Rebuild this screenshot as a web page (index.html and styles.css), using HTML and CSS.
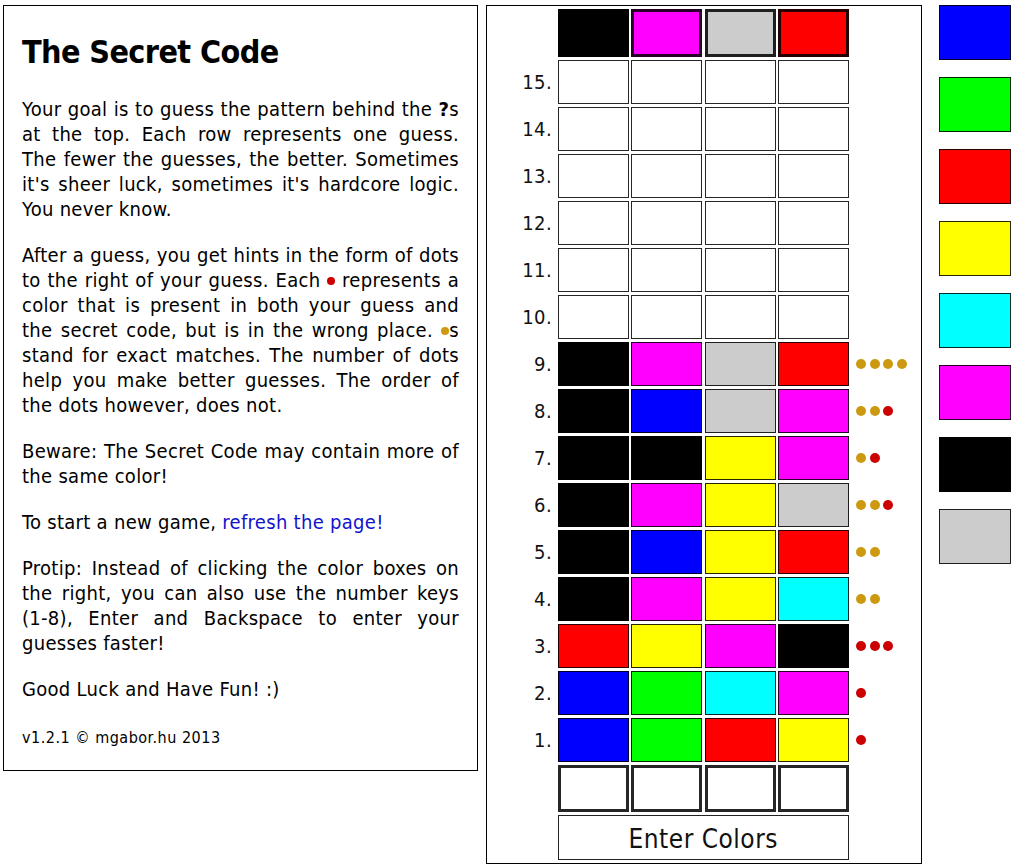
FILE: index.html
```html
<!DOCTYPE html>
<html>
<head>
<meta charset="utf-8">
<title>The Secret Code</title>
<link rel="stylesheet" href="styles.css">
</head>
<body>
<div class="page">
  <div class="info">
    <h1 class="title">The Secret Code</h1>
    <p class="para">
      <span class="line">Your goal is to guess the pattern behind the <b>?</b>s</span>
      <span class="line">at the top. Each row represents one guess.</span>
      <span class="line">The fewer the guesses, the better. Sometimes</span>
      <span class="line">it's sheer luck, sometimes it's hardcore logic.</span>
      <span class="line last">You never know.</span>
    </p>
    <p class="para">
      <span class="line">After a guess, you get hints in the form of dots</span>
      <span class="line">to the right of your guess. Each <span class="mini red"></span> represents a</span>
      <span class="line">color that is present in both your guess and</span>
      <span class="line">the secret code, but is in the wrong place. <span class="mini gold"></span>s</span>
      <span class="line">stand for exact matches. The number of dots</span>
      <span class="line">help you make better guesses. The order of</span>
      <span class="line last">the dots however, does not.</span>
    </p>
    <p class="para">
      <span class="line">Beware: The Secret Code may contain more of</span>
      <span class="line last">the same color!</span>
    </p>
    <p class="para">
      <span class="line last">To start a new game, <a class="link" href="#">refresh the page!</a></span>
    </p>
    <p class="para">
      <span class="line">Protip: Instead of clicking the color boxes on</span>
      <span class="line">the right, you can also use the number keys</span>
      <span class="line">(1-8), Enter and Backspace to enter your</span>
      <span class="line last">guesses faster!</span>
    </p>
    <p class="para">
      <span class="line last">Good Luck and Have Fun! :)</span>
    </p>
    <p class="version">v1.2.1 © mgabor.hu 2013</p>
  </div>

  <div class="board">
    <div class="row secret">
      <span class="label"></span>
      <span class="cell thick c-black"></span>
      <span class="cell thick c-magenta"></span>
      <span class="cell thick c-gray"></span>
      <span class="cell thick c-red"></span>
      <span class="hints"></span>
    </div>
    <div class="row"><span class="label">15.</span><span class="cell"></span><span class="cell"></span><span class="cell"></span><span class="cell"></span><span class="hints"></span></div>
    <div class="row"><span class="label">14.</span><span class="cell"></span><span class="cell"></span><span class="cell"></span><span class="cell"></span><span class="hints"></span></div>
    <div class="row"><span class="label">13.</span><span class="cell"></span><span class="cell"></span><span class="cell"></span><span class="cell"></span><span class="hints"></span></div>
    <div class="row"><span class="label">12.</span><span class="cell"></span><span class="cell"></span><span class="cell"></span><span class="cell"></span><span class="hints"></span></div>
    <div class="row"><span class="label">11.</span><span class="cell"></span><span class="cell"></span><span class="cell"></span><span class="cell"></span><span class="hints"></span></div>
    <div class="row"><span class="label">10.</span><span class="cell"></span><span class="cell"></span><span class="cell"></span><span class="cell"></span><span class="hints"></span></div>
    <div class="row"><span class="label">9.</span><span class="cell c-black"></span><span class="cell c-magenta"></span><span class="cell c-gray"></span><span class="cell c-red"></span><span class="hints"><i class="dot gold"></i><i class="dot gold"></i><i class="dot gold"></i><i class="dot gold"></i></span></div>
    <div class="row"><span class="label">8.</span><span class="cell c-black"></span><span class="cell c-blue"></span><span class="cell c-gray"></span><span class="cell c-magenta"></span><span class="hints"><i class="dot gold"></i><i class="dot gold"></i><i class="dot red"></i></span></div>
    <div class="row"><span class="label">7.</span><span class="cell c-black"></span><span class="cell c-black"></span><span class="cell c-yellow"></span><span class="cell c-magenta"></span><span class="hints"><i class="dot gold"></i><i class="dot red"></i></span></div>
    <div class="row"><span class="label">6.</span><span class="cell c-black"></span><span class="cell c-magenta"></span><span class="cell c-yellow"></span><span class="cell c-gray"></span><span class="hints"><i class="dot gold"></i><i class="dot gold"></i><i class="dot red"></i></span></div>
    <div class="row"><span class="label">5.</span><span class="cell c-black"></span><span class="cell c-blue"></span><span class="cell c-yellow"></span><span class="cell c-red"></span><span class="hints"><i class="dot gold"></i><i class="dot gold"></i></span></div>
    <div class="row"><span class="label">4.</span><span class="cell c-black"></span><span class="cell c-magenta"></span><span class="cell c-yellow"></span><span class="cell c-cyan"></span><span class="hints"><i class="dot gold"></i><i class="dot gold"></i></span></div>
    <div class="row"><span class="label">3.</span><span class="cell c-red"></span><span class="cell c-yellow"></span><span class="cell c-magenta"></span><span class="cell c-black"></span><span class="hints"><i class="dot red"></i><i class="dot red"></i><i class="dot red"></i></span></div>
    <div class="row"><span class="label">2.</span><span class="cell c-blue"></span><span class="cell c-green"></span><span class="cell c-cyan"></span><span class="cell c-magenta"></span><span class="hints"><i class="dot red"></i></span></div>
    <div class="row"><span class="label">1.</span><span class="cell c-blue"></span><span class="cell c-green"></span><span class="cell c-red"></span><span class="cell c-yellow"></span><span class="hints"><i class="dot red"></i></span></div>
    <div class="row input"><span class="label"></span><span class="cell thick"></span><span class="cell thick"></span><span class="cell thick"></span><span class="cell thick"></span><span class="hints"></span></div>
    <div class="row action"><span class="label"></span><button class="enter">Enter Colors</button><span class="hints"></span></div>
  </div>

  <div class="palette">
    <span class="swatch c-blue"></span>
    <span class="swatch c-green"></span>
    <span class="swatch c-red"></span>
    <span class="swatch c-yellow"></span>
    <span class="swatch c-cyan"></span>
    <span class="swatch c-magenta"></span>
    <span class="swatch c-black"></span>
    <span class="swatch c-gray"></span>
  </div>
</div>
</body>
</html>
```

FILE: styles.css
```css
body {
  margin: 0;
  background: #fff;
  color: #000;
  font-family: "DejaVu Sans Condensed", "DejaVu Sans", sans-serif;
  font-stretch: condensed;
}

.page {
  display: flex;
  align-items: flex-start;
  padding: 5px 0 0 3px;
}

.info {
  width: 437px;
  border: 1px solid #000;
  padding: 27px 18px 22px 18px;
}

.title {
  margin: 0 0 26px;
  font-size: 32px;
  line-height: 38px;
  font-weight: bold;
  letter-spacing: -0.6px;
}

.para {
  margin: 0 0 21px;
  font-size: 20px;
  line-height: 25px;
  letter-spacing: 0.3px;
}

.line {
  display: block;
  text-align: justify;
  text-align-last: justify;
}

.line.last {
  text-align-last: left;
}

.version {
  margin: 26px 0 0;
  font-size: 16px;
  line-height: 20px;
  letter-spacing: 0.5px;
}

.link {
  color: #1212cc;
  text-decoration: none;
}

.mini {
  display: inline-block;
  width: 8px;
  height: 8px;
  border-radius: 50%;
  vertical-align: 2px;
}

.mini.red { background: #cc0000; }
.mini.gold { background: #cc9911; }

.board {
  margin-left: 8px;
  width: 428px;
  border: 1px solid #000;
  padding: 3px;
  display: flex;
  flex-direction: column;
  gap: 3px;
}

.row {
  display: grid;
  grid-template-columns: 65px repeat(4, 71px) 1fr;
  column-gap: 2.5px;
  height: 44px;
}

.row.secret { height: 48px; }
.row.input { height: 47px; }
.row.action { height: 45px; }

.label {
  display: flex;
  align-items: center;
  justify-content: flex-end;
  padding-right: 3px;
  font-size: 20px;
  letter-spacing: 0.4px;
  color: #111;
}

.cell {
  border: 1px solid rgba(0, 0, 0, 0.85);
  background: #fff;
}

.cell.thick {
  border-width: 3px;
}

.hints {
  display: flex;
  align-items: center;
  gap: 3.5px;
  padding-left: 4.5px;
}

.dot {
  display: block;
  width: 10px;
  height: 10px;
  border-radius: 50%;
}

.dot.gold { background: #cc9911; }
.dot.red { background: #cc0000; }

.enter {
  grid-column: 2 / span 4;
  margin: 0;
  padding: 2px 0 0;
  border: 1px solid #222;
  background: #fff;
  font-family: inherit;
  font-stretch: condensed;
  font-size: 26px;
  letter-spacing: 0.5px;
  color: #111;
}

.palette {
  margin-left: 17px;
  display: flex;
  flex-direction: column;
  gap: 17px;
}

.swatch {
  display: block;
  width: 70px;
  height: 53px;
  border: 1px solid rgba(0, 0, 0, 0.85);
}

.c-black { background: #000; }
.c-magenta { background: #ff00ff; }
.c-gray { background: #cccccc; }
.c-red { background: #ff0000; }
.c-blue { background: #0000ff; }
.c-green { background: #00ff00; }
.c-yellow { background: #ffff00; }
.c-cyan { background: #00ffff; }
```
